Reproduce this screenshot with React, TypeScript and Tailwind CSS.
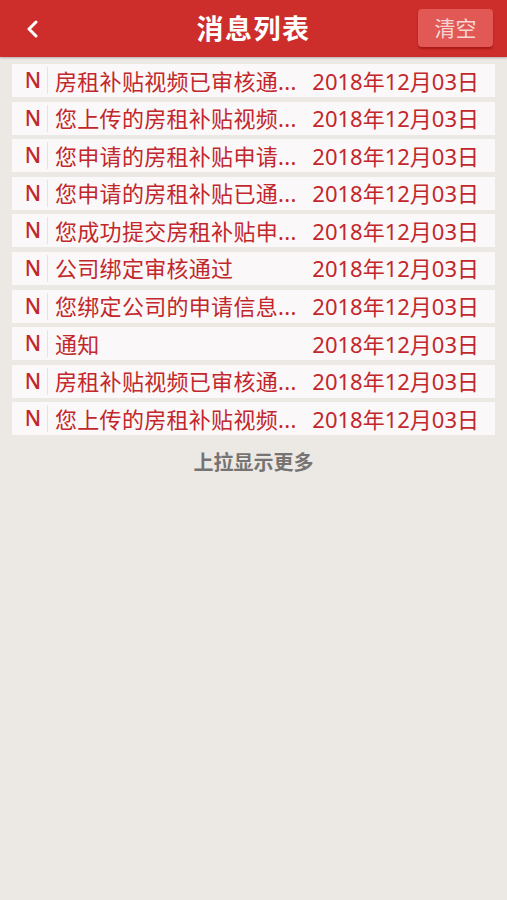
import React from "react";

const rows = [
  "房租补贴视频已审核通...",
  "您上传的房租补贴视频...",
  "您申请的房租补贴申请...",
  "您申请的房租补贴已通...",
  "您成功提交房租补贴申...",
  "公司绑定审核通过",
  "您绑定公司的申请信息...",
  "通知",
  "房租补贴视频已审核通...",
  "您上传的房租补贴视频...",
];

const font = {
  fontFamily: '"Noto Sans", "Noto Sans CJK SC", sans-serif',
};

export default function App() {
  return (
    <div className="min-h-[900px] bg-[#ECE9E5]" style={font}>
      <header className="relative h-[57px] bg-[#CE2E2B] flex items-center justify-center shadow-[0_1px_2px_rgba(0,0,0,0.25)]">
        <button className="absolute left-[22px] top-[19px] w-[20px] h-[20px] flex items-center justify-center">
          <svg width="14" height="18" viewBox="0 0 14 18" fill="none">
            <path
              d="M11 2 L4 9 L11 16"
              stroke="white"
              strokeWidth="3"
              strokeLinecap="round"
              strokeLinejoin="round"
            />
          </svg>
        </button>
        <h1 className="text-white text-[27px] font-bold tracking-[1.5px] leading-none">
          消息列表
        </h1>
        <button className="absolute right-[14px] top-[9px] w-[75px] h-[38px] rounded-[4px] bg-[#E25855] text-[#F6D6D4] text-[21px] leading-none shadow-[0_2px_2px_rgba(120,0,0,0.45)] flex items-center justify-center">
          清空
        </button>
      </header>

      <ul className="flex flex-col gap-[4.6px] px-[12px] pt-[7px] pb-[4px]">
        {rows.map((text, i) => (
          <li
            key={i}
            className="h-[33px] bg-[#FAF8F8] flex items-center text-[#C2272C] text-[22px] leading-none"
          >
            <span className="w-[35px] shrink-0 flex justify-center pl-[7px] font-medium text-[21px]">
              N
            </span>
            <span className="w-px h-[27px] shrink-0 bg-[#E9E2E2]" />
            <span className="flex-1 pl-[7px] whitespace-nowrap tracking-[0.3px]">
              {text}
            </span>
            <span className="pr-[16px] shrink-0 whitespace-nowrap">2018年12月03日</span>
          </li>
        ))}
      </ul>

      <p className="text-center text-[20px] font-bold text-[#767472] mt-[9px]">
        上拉显示更多
      </p>
    </div>
  );
}
